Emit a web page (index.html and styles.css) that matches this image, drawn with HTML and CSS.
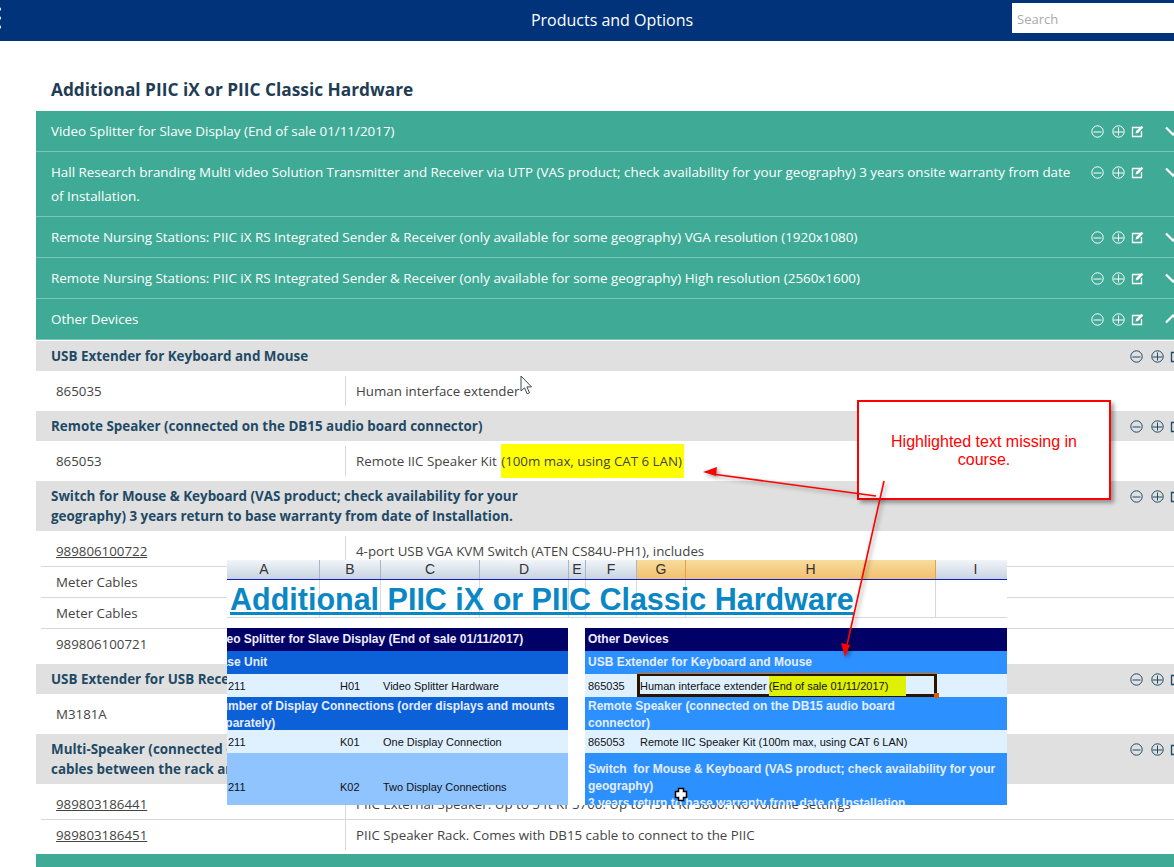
FILE: index.html
```html
<!DOCTYPE html>
<html lang="en">
<head>
  <meta charset="UTF-8" />
  <title>Products and Options</title>
  <link rel="stylesheet" href="styles.css">
</head>
<body>
  <svg class="defs" width="0" height="0">
    <symbol id="i-minus" viewBox="0 0 13 13">
      <circle cx="6.5" cy="6.5" r="5.7" fill="none" stroke="currentColor"/>
      <path d="M2.5 7h8" stroke="currentColor" fill="none"/>
    </symbol>
    <symbol id="i-plus" viewBox="0 0 13 13">
      <circle cx="6.5" cy="6.5" r="5.7" fill="none" stroke="currentColor"/>
      <path d="M1.5 7h10M6.5 2.5v8" stroke="currentColor" fill="none"/>
    </symbol>
    <symbol id="i-edit" viewBox="0 0 13 13">
      <path d="M9 2.5H1.5v9h9V6" fill="none" stroke="currentColor" stroke-width="1.3"/>
      <path d="M4.5 8.5l.6-2.400L10.500.8l1.800 1.800L7 8z" fill="currentColor"/>
    </symbol>
  </svg>

  <header class="topbar">
    <div class="menu-dots"><i></i><i></i><i></i></div>
    <div class="topbar-title">Products and Options</div>
    <input class="search" type="text" placeholder="Search">
  </header>

  <main class="content">
    <h1 class="heading">Additional PIIC iX or PIIC Classic Hardware</h1>

    <div class="acc">
      <div class="acc-text">Video Splitter for Slave Display (End of sale 01/11/2017)</div>
      <div class="icons"><svg class="icon"><use href="#i-minus"/></svg><svg class="icon"><use href="#i-plus"/></svg><svg class="icon icon-edit"><use href="#i-edit"/></svg></div>
      <svg class="chev" viewBox="0 0 16 10"><path d="M1 1.5l7 7 7-7"/></svg>
    </div>
    <div class="acc">
      <div class="acc-text">Hall Research branding Multi video Solution Transmitter and Receiver via UTP (VAS product; check availability for your geography) 3 years onsite warranty from date of Installation.</div>
      <div class="icons"><svg class="icon"><use href="#i-minus"/></svg><svg class="icon"><use href="#i-plus"/></svg><svg class="icon icon-edit"><use href="#i-edit"/></svg></div>
      <svg class="chev" viewBox="0 0 16 10"><path d="M1 1.5l7 7 7-7"/></svg>
    </div>
    <div class="acc">
      <div class="acc-text">Remote Nursing Stations: PIIC iX RS Integrated Sender &amp; Receiver (only available for some geography) VGA resolution (1920x1080)</div>
      <div class="icons"><svg class="icon"><use href="#i-minus"/></svg><svg class="icon"><use href="#i-plus"/></svg><svg class="icon icon-edit"><use href="#i-edit"/></svg></div>
      <svg class="chev" viewBox="0 0 16 10"><path d="M1 1.5l7 7 7-7"/></svg>
    </div>
    <div class="acc">
      <div class="acc-text">Remote Nursing Stations: PIIC iX RS Integrated Sender &amp; Receiver (only available for some geography) High resolution (2560x1600)</div>
      <div class="icons"><svg class="icon"><use href="#i-minus"/></svg><svg class="icon"><use href="#i-plus"/></svg><svg class="icon icon-edit"><use href="#i-edit"/></svg></div>
      <svg class="chev" viewBox="0 0 16 10"><path d="M1 1.5l7 7 7-7"/></svg>
    </div>
    <div class="acc">
      <div class="acc-text">Other Devices</div>
      <div class="icons"><svg class="icon"><use href="#i-minus"/></svg><svg class="icon"><use href="#i-plus"/></svg><svg class="icon icon-edit"><use href="#i-edit"/></svg></div>
      <svg class="chev" viewBox="0 0 16 10"><path d="M1 8.5l7-7 7 7"/></svg>
    </div>

    <div class="sub first">
      <div class="sub-text">USB Extender for Keyboard and Mouse</div>
      <div class="icons"><svg class="icon"><use href="#i-minus"/></svg><svg class="icon"><use href="#i-plus"/></svg><svg class="icon icon-edit"><use href="#i-edit"/></svg></div>
    </div>
    <div class="rows">
      <div class="row"><div class="code">865035</div><div class="desc">Human interface extender</div></div>
    </div>

    <div class="sub">
      <div class="sub-text">Remote Speaker (connected on the DB15 audio board connector)</div>
      <div class="icons"><svg class="icon"><use href="#i-minus"/></svg><svg class="icon"><use href="#i-plus"/></svg><svg class="icon icon-edit"><use href="#i-edit"/></svg></div>
    </div>
    <div class="rows">
      <div class="row"><div class="code">865053</div><div class="desc">Remote IIC Speaker Kit <span class="mark">(100m max, using CAT 6 LAN)</span></div></div>
    </div>

    <div class="sub">
      <div class="sub-text">Switch for Mouse &amp; Keyboard (VAS product; check availability for your geography) 3 years return to base warranty from date of Installation.</div>
      <div class="icons"><svg class="icon"><use href="#i-minus"/></svg><svg class="icon"><use href="#i-plus"/></svg><svg class="icon icon-edit"><use href="#i-edit"/></svg></div>
    </div>
    <div class="rows">
      <div class="row"><div class="code"><a href="#">989806100722</a></div><div class="desc">4-port USB VGA KVM Switch (ATEN CS84U-PH1), includes</div></div>
      <div class="row"><div class="code">Meter Cables</div><div class="desc"></div></div>
      <div class="row"><div class="code">Meter Cables</div><div class="desc"></div></div>
      <div class="row"><div class="code">989806100721</div><div class="desc"></div></div>
    </div>

    <div class="sub">
      <div class="sub-text">USB Extender for USB Receiver</div>
      <div class="icons"><svg class="icon"><use href="#i-minus"/></svg><svg class="icon"><use href="#i-plus"/></svg><svg class="icon icon-edit"><use href="#i-edit"/></svg></div>
    </div>
    <div class="rows">
      <div class="row"><div class="code">M3181A</div><div class="desc"></div></div>
    </div>

    <div class="sub">
      <div class="sub-text">Multi-Speaker (connected on the DB15 audio board connector; includes cables between the rack and the PIIC)</div>
      <div class="icons"><svg class="icon"><use href="#i-minus"/></svg><svg class="icon"><use href="#i-plus"/></svg><svg class="icon icon-edit"><use href="#i-edit"/></svg></div>
    </div>
    <div class="rows rows-end">
      <div class="row"><div class="code"><a href="#">989803186441</a></div><div class="desc">PIIC External Speaker. Up to 5 ft Kf 5700. Up to 15 ft Kf 5800. No volume settings</div></div>
      <div class="row"><div class="code"><a href="#">989803186451</a></div><div class="desc">PIIC Speaker Rack. Comes with DB15 cable to connect to the PIIC</div></div>
    </div>

    <div class="acc acc-end"></div>
  </main>

  <!-- pasted excel screenshot and the review notes on top of the page -->
  <section class="sheet">
    <div class="sheet-cols">
      <div class="col-a">A</div><div>B</div><div>C</div><div>D</div><div>E</div><div>F</div>
      <div class="sel">G</div><div class="sel">H</div><div class="col-i">I</div>
    </div>
    <div class="sheet-title-row">
      <div class="sheet-lines">
        <i></i><i></i><i></i><i></i><i></i><i></i><i></i><i></i><i></i>
      </div>
      <div class="sheet-title">Additional PIIC iX or PIIC Classic Hardware</div>
    </div>
    <div class="sheet-blocks">
      <div class="block block-left">
        <div class="b-head"><span class="cut-a">Video Splitter for Slave Display (End of sale 01/11/2017)</span></div>
        <div class="b-sub"><span class="cut-b">Base Unit</span></div>
        <div class="b-row"><span>211</span><span>H01</span><span>Video Splitter Hardware</span></div>
        <div class="b-sub b-two"><span class="cut-b">Number of Display Connections (order displays and mounts separately)</span></div>
        <div class="b-row"><span>211</span><span>K01</span><span>One Display Connection</span></div>
        <div class="b-row b-tall"><span>211</span><span>K02</span><span>Two Display Connections</span></div>
      </div>
      <div class="block block-right">
        <div class="b-head">Other Devices</div>
        <div class="b-sub">USB Extender for Keyboard and Mouse</div>
        <div class="b-row">
          <span>865035</span>
          <span class="b-sel">Human interface extender <span class="b-mark">(End of sale 01/11/2017)</span><i class="b-handle"></i></span>
        </div>
        <div class="b-sub b-two">Remote Speaker (connected on the DB15 audio board connector)</div>
        <div class="b-row"><span>865053</span><span>Remote IIC Speaker Kit (100m max, using CAT 6 LAN)</span></div>
        <div class="b-sub b-last">Switch&nbsp; for Mouse &amp; Keyboard (VAS product; check availability for your geography)<br>3 years return to base warranty from date of Installation</div>
      </div>
    </div>
  </section>

  <div class="callout">Highlighted text missing in course.</div>

  <svg class="marks" width="1174" height="867" viewBox="0 0 1174 867">
    <g class="arrow">
      <path d="M876 496L712 474" fill="none" stroke="#f00" stroke-width="1.6"/>
      <path d="M703 472l14-5-1 9z" fill="#f00"/>
      <path d="M884 481L847 645" fill="none" stroke="#f00" stroke-width="1.6"/>
      <path d="M845 657l-4-14 9 2z" fill="#f00"/>
    </g>
    <!-- mouse pointer -->
    <path d="M521 376v15l3.500-3.200 2.600 6 2.400-1-2.600-5.900h4.600z" fill="#fff" stroke="#3a4a55" stroke-width="1"/>
    <!-- excel cross cursor -->
    <path d="M678.500 788.500h5v3h3v6h-3v3h-5v-3h-3v-6h3z" fill="#fff" stroke="#000" stroke-width="1.500"/>
  </svg>
</body>
</html>
```

FILE: styles.css
```css
* {
  box-sizing: border-box;
  margin: 0;
  padding: 0;
}

html, body {
  width: 1174px;
  height: 867px;
  overflow: hidden;
}

body {
  position: relative;
  font-family: 'Open Sans', sans-serif;
  font-size: 13.4px;
  color: #444;
  background: #fff;
}

.defs {
  position: absolute;
}

/* top bar */
.topbar {
  height: 41px;
  background: #00337a;
  display: flex;
  align-items: flex-start;
  position: relative;
}

.menu-dots {
  display: flex;
  flex-direction: column;
  gap: 5px;
  margin: 7px 0 0 -3px;
}

.menu-dots i {
  display: block;
  width: 4px;
  height: 4px;
  background: #fff;
  border-radius: 50%;
}

.topbar-title {
  position: absolute;
  left: 0;
  width: 1224px;
  text-align: center;
  color: #fff;
  font-size: 16px;
  line-height: 41px;
}

.search {
  position: absolute;
  left: 1012px;
  top: 3px;
  width: 180px;
  height: 30px;
  border: none;
  outline: none;
  padding: 1px 5px 0;
  background: #fff;
  font-family: 'Open Sans', sans-serif;
  font-size: 13px;
}

.search::placeholder {
  color: #aaa;
}

/* main list */
.content {
  margin-left: 36px;
  width: 1164px;
}

.heading {
  font-size: 17.3px;
  line-height: 24px;
  color: #1f3d55;
  font-weight: 700;
  padding: 37px 0 9px 15px;
}

.acc {
  background: #3fab96;
  color: #fff;
  display: flex;
  align-items: flex-start;
  padding: 8px 15px;
  line-height: 24px;
  border-bottom: 1px solid #7cc6b7;
}

.acc-text {
  width: 1025px;
  flex: none;
}

.acc .icons {
  margin-left: 15px;
}

.icons {
  display: flex;
  gap: 8px;
  align-items: center;
  height: 24px;
}

.icon {
  width: 13px;
  height: 13px;
  flex: none;
}

.icon-edit {
  margin-left: -2px;
}

.chev {
  width: 16px;
  height: 10px;
  margin: 7px 0 0 21px;
  flex: none;
  fill: none;
  stroke: #fff;
  stroke-width: 2.2;
}

.acc-end {
  height: 30px;
  border: none;
}

.sub {
  background: #e0e0e0;
  color: #1f4a66;
  font-weight: 700;
  display: flex;
  justify-content: space-between;
  align-items: flex-start;
  padding: 5px 12px 5px 15px;
  line-height: 20px;
}

.sub.first {
  margin-top: 1px;
}

.sub-text {
  width: 480px;
}

.sub .icons {
  height: 20px;
  width: 58px;
}

.rows {
  padding: 5px 0 5px 5px;
}

.rows-end {
  padding-bottom: 4px;
}

.row {
  display: grid;
  grid-template-columns: 304px 1fr;
  height: 31px;
  border-bottom: 1px solid #d8d8d8;
  line-height: 30px;
  font-size: 13.3px;
}

.row:last-child {
  height: 30px;
  border-bottom: none;
}

.code {
  padding-left: 15px;
}

.code a {
  color: #444;
}

.desc {
  border-left: 1px solid #d8d8d8;
  padding-left: 10px;
}

.mark {
  background: #ff0;
  padding: 8px 2px 8px 0;
  margin-left: 1px;
}

/* excel paste */
.sheet {
  position: absolute;
  left: 227px;
  top: 560px;
  width: 780px;
  height: 245px;
  background: #fff;
  overflow: hidden;
  font-family: 'Liberation Sans', sans-serif;
}

.sheet-cols,
.sheet-lines {
  display: grid;
  grid-template-columns: 93px 61px 99px 89px 17px 51px 49px 250px 71px;
}

.sheet-cols {
  height: 20px;
  border-bottom: 1px solid #1020c0;
  font-size: 14px;
  line-height: 19px;
  text-align: center;
  color: #333;
}

.sheet-cols div {
  background: linear-gradient(#f2f5f9, #c8d3e2);
  border-right: 1px solid #a8b6c8;
}

.sheet-cols .sel {
  background: linear-gradient(#f8dc9c, #f2c070);
  border-right-color: #e8a050;
}

.sheet-cols .col-a {
  padding-right: 18px;
}

.sheet-cols .col-i {
  padding-left: 8px;
  border-right: none;
}

.sheet-title-row {
  position: relative;
  height: 48px;
}

.sheet-lines {
  height: 38px;
  border-bottom: 1px solid #d4dae4;
}

.sheet-lines i {
  border-right: 1px solid #d4dae4;
}

.sheet-lines i:last-child {
  border-right: none;
}

.sheet-title {
  position: absolute;
  left: 3px;
  top: 1px;
  font-size: 30.5px;
  line-height: 36px;
  font-weight: 700;
  color: #0a87c4;
  text-decoration: underline;
  white-space: nowrap;
}

.sheet-blocks {
  display: flex;
  gap: 17px;
}

.block {
  font-size: 12px;
  font-weight: 700;
  overflow: hidden;
}

.block-left {
  width: 341px;
}

.block-right {
  width: 422px;
}

.b-head {
  height: 23px;
  line-height: 22px;
  background: #000066;
  color: #eef;
  padding-left: 3px;
  white-space: nowrap;
}

.b-sub {
  height: 23px;
  line-height: 22px;
  padding-left: 3px;
  color: #e4eeff;
}

.block-left .b-sub {
  background: #0c60d8;
}

.block-right .b-sub {
  background: #2d90ff;
}

.b-two {
  height: 33px;
  line-height: 17px;
  padding-top: 1px;
}

.block-left .b-two {
  padding-right: 8px;
}

.block-right .b-two {
  padding-right: 90px;
}

.b-last,
.block-right .b-last {
  height: 52px;
  line-height: 17px;
  padding-top: 8px;
}

.cut-a {
  margin-left: -22px;
}

.cut-b {
  display: block;
  margin-left: -18px;
}

.b-row {
  height: 23px;
  line-height: 25px;
  background: #dff0ff;
  font-size: 11px;
  font-weight: 400;
  color: #111;
  display: grid;
  white-space: nowrap;
}

.block-left .b-row {
  grid-template-columns: 112px 43px 1fr;
  padding-left: 1px;
}

.block-right .b-row {
  grid-template-columns: 52px 1fr;
  padding-left: 3px;
}

.b-tall {
  height: 52px;
  background: #90c4ff;
  align-items: end;
  padding-bottom: 5px;
}

.b-sel {
  position: relative;
  height: 23px;
  width: 300px;
  margin-left: -3px;
  border: 3px solid #2a1400;
  border-top-width: 2px;
  line-height: 20px;
  box-shadow: 0 -1px 0 #d07010;
}

.b-mark {
  background: #dff000;
  display: inline-block;
  width: 137px;
  margin-left: -1px;
}

.b-handle {
  position: absolute;
  right: -5px;
  bottom: -4px;
  width: 5px;
  height: 5px;
  background: #d06010;
}

/* note box + arrows */
.callout {
  position: absolute;
  left: 857px;
  top: 400px;
  width: 254px;
  height: 100px;
  background: #fff;
  border: 2px solid #f00;
  box-shadow: 3px 3px 4px rgba(0, 0, 0, 0.35);
  color: #f00;
  font-family: 'Liberation Sans', sans-serif;
  font-size: 16px;
  line-height: 18px;
  text-align: center;
  padding: 31px 20px 0;
}

.marks {
  position: absolute;
  left: 0;
  top: 0;
}

.arrow {
  filter: drop-shadow(2px 2px 2px rgba(0, 0, 0, 0.4));
}
```
